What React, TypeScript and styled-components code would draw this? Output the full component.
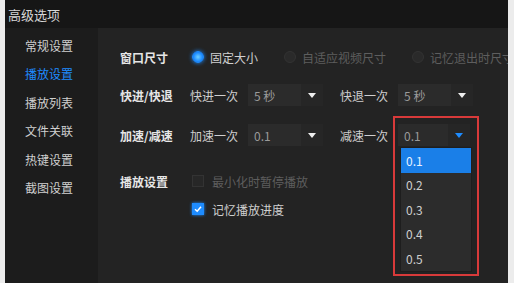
import React from 'react';
import styled, { createGlobalStyle } from 'styled-components';

const GlobalStyle = createGlobalStyle`
  html, body {
    margin: 0;
    padding: 0;
    background: #ececec;
    font-family: "Noto Sans CJK SC", "Noto Sans", sans-serif;
  }
`;

const Window = styled.div`
  margin-left: 5px;
  width: 503px;
  height: 283px;
  display: flex;
  flex-direction: column;
  background: #232323;
  overflow: hidden;
`;

const TitleBar = styled.div`
  height: 28px;
  flex-shrink: 0;
  display: flex;
  align-items: center;
  padding-left: 3px;
  background: #161616;
  color: #d8d8d8;
  font-size: 13px;
`;

const Body = styled.div`
  flex: 1;
  display: flex;
  min-height: 0;
`;

const Sidebar = styled.nav`
  width: 93px;
  flex-shrink: 0;
  background: #1c1c1c;
  padding-top: 3px;
  display: flex;
  flex-direction: column;
`;

const NavItem = styled.div<{ $active?: boolean }>`
  height: 28.5px;
  display: flex;
  align-items: center;
  padding-left: 20px;
  font-size: 12px;
  color: ${p => (p.$active ? '#1f8bff' : '#cfcfcf')};
`;

const Content = styled.main`
  flex: 1;
  position: relative;
  padding: 18px 0 0 22px;
  display: flex;
  flex-direction: column;
  overflow: hidden;
`;

const Row = styled.div<{ $mt?: number }>`
  height: 22px;
  display: flex;
  align-items: center;
  margin-top: ${p => p.$mt ?? 0}px;
  white-space: nowrap;
`;

const Label = styled.div`
  width: 70px;
  flex-shrink: 0;
  font-size: 12px;
  font-weight: bold;
  color: #e6e6e6;
`;

const Radio = styled.span<{ $on?: boolean }>`
  width: 10px;
  height: 10px;
  border-radius: 50%;
  flex-shrink: 0;
  margin-left: 2px;
  margin-right: 6px;
  background: ${p => (p.$on ? 'radial-gradient(circle, #6fd0ff 0%, #1e8cff 60%, #0a5fc8 100%)' : '#2a2a2a')};
  border: 1px solid ${p => (p.$on ? '#1e8cff' : '#333')};
  box-shadow: ${p => (p.$on ? '0 0 4px #1e8cff' : 'none')};
`;

const OptText = styled.span<{ $dim?: boolean; $gap?: number }>`
  font-size: 12px;
  flex-shrink: 0;
  color: ${p => (p.$dim ? '#5e5e5e' : '#cfcfcf')};
  margin-right: ${p => p.$gap ?? 0}px;
`;

const SelectBox = styled.div<{ $w?: number }>`
  position: relative;
  width: ${p => p.$w ?? 75}px;
  height: 22px;
  margin-left: 10px;
  margin-right: 17px;
  display: flex;
  align-items: center;
  background: #2b2b2b;
  font-size: 12px;
  color: #9a9a9a;
  flex-shrink: 0;
`;

const SelectValue = styled.span`
  flex: 1;
  padding-left: 6px;
`;

const ArrowButton = styled.span<{ $open?: boolean }>`
  width: 22px;
  height: 22px;
  display: flex;
  align-items: center;
  justify-content: center;
  background: #262626;
  &::after {
    content: '';
    border-left: 4px solid transparent;
    border-right: 4px solid transparent;
    border-top: 5px solid ${p => (p.$open ? '#1e8cff' : '#eeeeee')};
  }
`;

const DropList = styled.div`
  position: absolute;
  top: 23px;
  left: 2px;
  width: 70px;
  background: #2c2c2c;
  border: 1px solid #1e1e1e;
  display: flex;
  flex-direction: column;
  z-index: 2;
`;

const DropItem = styled.div<{ $active?: boolean }>`
  height: 24.5px;
  display: flex;
  align-items: center;
  padding-left: 5px;
  font-size: 12px;
  color: ${p => (p.$active ? '#e8f2ff' : '#cfcfcf')};
  background: ${p => (p.$active ? '#1a7fe8' : 'transparent')};
`;

const Highlight = styled.div`
  position: absolute;
  left: -5px;
  top: -8px;
  width: 86px;
  height: 160px;
  border: 2px solid #d83a3a;
  box-sizing: border-box;
  pointer-events: none;
  z-index: 3;
`;

const Check = styled.span<{ $on?: boolean }>`
  width: 10px;
  height: 10px;
  flex-shrink: 0;
  margin-left: 2px;
  margin-right: 8px;
  display: flex;
  align-items: center;
  justify-content: center;
  background: ${p => (p.$on ? '#1e8cff' : '#272727')};
  border: 1px solid ${p => (p.$on ? '#1e8cff' : '#333')};
  box-shadow: ${p => (p.$on ? '0 0 3px #1e8cff' : 'none')};
`;

const Indent = styled.div`
  width: 70px;
  flex-shrink: 0;
`;

function Select({ value, open, items }: { value: string; open?: boolean; items?: string[] }) {
  return (
    <SelectBox $w={open ? 72 : 75}>
      <SelectValue>{value}</SelectValue>
      <ArrowButton $open={open} />
      {open && items && (
        <>
          <DropList>
            {items.map((it, i) => (
              <DropItem key={it} $active={i === 0}>{it}</DropItem>
            ))}
          </DropList>
          <Highlight />
        </>
      )}
    </SelectBox>
  );
}

export default function App() {
  const nav = ['常规设置', '播放设置', '播放列表', '文件关联', '热键设置', '截图设置'];
  return (
    <>
      <GlobalStyle />
      <Window>
        <TitleBar>高级选项</TitleBar>
        <Body>
          <Sidebar>
            {nav.map((n, i) => (
              <NavItem key={n} $active={i === 1}>{n}</NavItem>
            ))}
          </Sidebar>
          <Content>
            <Row>
              <Label>窗口尺寸</Label>
              <Radio $on />
              <OptText $gap={24}>固定大小</OptText>
              <Radio />
              <OptText $dim $gap={24}>自适应视频尺寸</OptText>
              <Radio />
              <OptText $dim>记忆退出时尺寸</OptText>
            </Row>
            <Row $mt={16}>
              <Label>快进/快退</Label>
              <OptText>快进一次</OptText>
              <Select value="5 秒" />
              <OptText>快退一次</OptText>
              <Select value="5 秒" />
            </Row>
            <Row $mt={18}>
              <Label>加速/减速</Label>
              <OptText>加速一次</OptText>
              <Select value="0.1" />
              <OptText>减速一次</OptText>
              <Select value="0.1" open items={['0.1', '0.2', '0.3', '0.4', '0.5']} />
            </Row>
            <Row $mt={24}>
              <Label>播放设置</Label>
              <Check />
              <OptText $dim>最小化时暂停播放</OptText>
            </Row>
            <Row $mt={6}>
              <Indent />
              <Check $on>
                <svg width="8" height="8" viewBox="0 0 8 8">
                  <path d="M1 4.2 L3.2 6.2 L7 1.8" stroke="#fff" strokeWidth="1.5" fill="none" />
                </svg>
              </Check>
              <OptText>记忆播放进度</OptText>
            </Row>
          </Content>
        </Body>
      </Window>
    </>
  );
}
